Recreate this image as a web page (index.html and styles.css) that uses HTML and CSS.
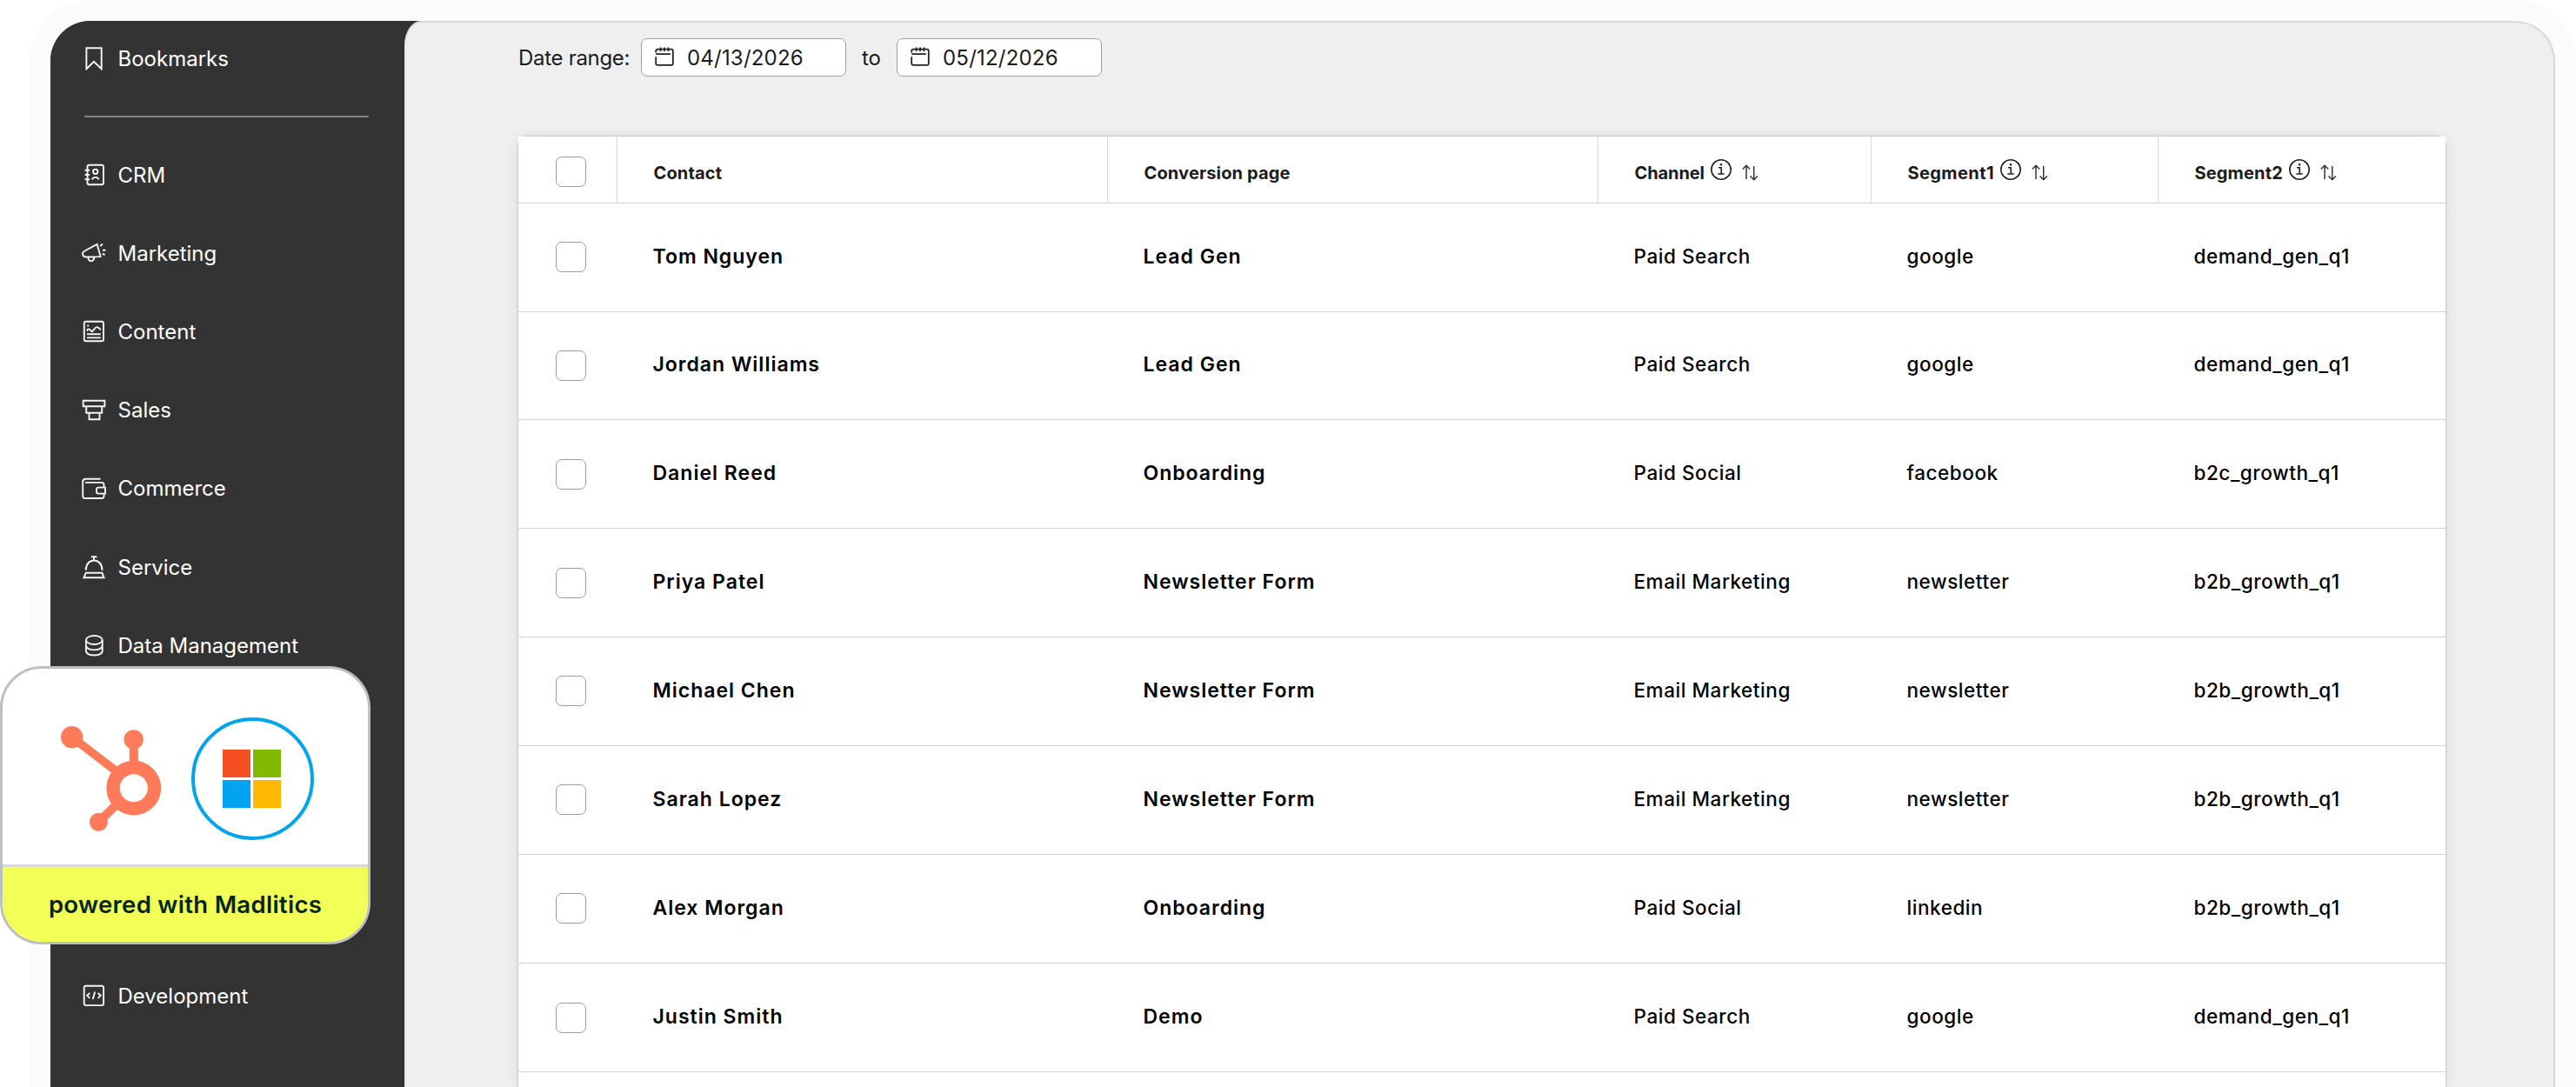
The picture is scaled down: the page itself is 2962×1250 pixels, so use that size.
FILE: index.html
```html
<!DOCTYPE html>
<html lang="en">
<head>
  <meta charset="UTF-8">
  <title>Contacts</title>
  <link rel="stylesheet" href="styles.css">
</head>
<body>
  <div class="window">
    <nav class="sidebar">
      <a class="nav-item nav-first">
        <svg class="nav-icon" viewBox="0 0 28 28"><path d="M5.4 2.3h17.3v24L14 17.8l-8.6 8.5z"/></svg>
        Bookmarks
      </a>
      <hr class="divider">
      <a class="nav-item">
        <svg class="nav-icon" viewBox="0 0 28 28"><rect x="6.5" y="2.8" width="18.5" height="22.4" rx="2"/><path d="M3.5 8.8h5.6M3.5 14h5.6M3.5 19.2h5.6M12 19.4c1-3.4 6.4-3.4 7.4 0"/><circle cx="15.7" cy="10.3" r="2.7"/></svg>
        CRM
      </a>
      <a class="nav-item">
        <svg class="nav-icon" viewBox="0 0 28 28"><path d="M17.6 3.8 2.6 12c-1.6.9-1.8 2-1.5 3.4.5 2.2 1.3 3.1 3.1 3.1l17.4-.4zM7.3 18.600c0 6.200 6.600 6.200 7.200-.2M21.200 6.200l2.700-2.700M24 10.800h3.400M23.600 15l3.200.9"/></svg>
        Marketing
      </a>
      <a class="nav-item">
        <svg class="nav-icon" viewBox="0 0 28 28"><rect x="2.8" y="2.7" width="22.2" height="22.6" rx="2"/><path d="M5.800 13.500c2-3.400 3.800-1.700 5.600.6 2.300 0 3.800-6.200 7-4.800 1.500.6 2 1.400 3.400 3M6 17.300h15.800M6 21.400h15.800M6.300 7.500h1.800"/></svg>
        Content
      </a>
      <a class="nav-item">
        <svg class="nav-icon" viewBox="0 0 28 28"><path d="M1.700 2.700h24.700v6.600H1.700zM5.200 9.300h18v7.500h-18zM8.500 16.800h12v7.400h-12z"/></svg>
        Sales
      </a>
      <a class="nav-item">
        <svg class="nav-icon" viewBox="0 0 28 28"><path d="M21.500 2.700H4.500Q1.200 3 1.200 6v16.500q0 2.500 2.500 2.500H23q2.500 0 2.500-2.500V19.500M4 6.900h19q2.500.2 2.500 2.500v3.200M27 12.600v7h-8q-2 0-2-2v-3q0-2 2-2z"/></svg>
        Commerce
      </a>
      <a class="nav-item">
        <svg class="nav-icon" viewBox="0 0 28 28"><path d="M10.800 2.200h6.600M14 2.200v4.200M4.700 17.700c0-15 18.800-15 18.800 0M4.800 20.800h18.600l2.200 5.500H2.400z"/></svg>
        Service
      </a>
      <a class="nav-item">
        <svg class="nav-icon" viewBox="0 0 28 28"><ellipse cx="14.3" cy="8" rx="9.4" ry="5"/><path d="M4.900 8v12.500c0 6.700 18.800 6.700 18.800 0V8M4.900 14.300c0 6.700 18.800 6.700 18.800 0"/></svg>
        Data Management
      </a>
      <a class="nav-item nav-last">
        <svg class="nav-icon" viewBox="0 0 28 28"><rect x="2.7" y="2.7" width="22.4" height="22.4" rx="2"/><path d="m9.200 10.800-3 3 3 3M18.700 10.800l3 3-3 3M15.200 9.500l-2.500 8.600"/></svg>
        Development
      </a>
    </nav>

    <main class="main">
      <div class="filters">
        <span class="filter-label">Date range:</span>
        <div class="date">
          <svg class="date-icon" viewBox="0 0 22 22"><path d="M1.200 6.500V4.700q0-2 2-2h15.600q2 0 2 2v14.400q0 1.800-1.800 1.800H3.200q-2 0-2-2V11.300M1.200 8.200h16.600M6.600.5v4.400M11 .5v4.400M15.400.5v4.400"/></svg>
          04/13/2026
        </div>
        <span class="filter-to">to</span>
        <div class="date">
          <svg class="date-icon" viewBox="0 0 22 22"><path d="M1.200 6.500V4.700q0-2 2-2h15.600q2 0 2 2v14.400q0 1.800-1.800 1.800H3.200q-2 0-2-2V11.300M1.200 8.200h16.600M6.600.5v4.400M11 .5v4.400M15.400.5v4.400"/></svg>
          05/12/2026
        </div>
      </div>

      <div class="table" id="contacts">
        <div class="row head">
          <div class="check-cell"><span class="checkbox"></span></div>
          <div>Contact</div>
          <div>Conversion page</div>
          <div><span class="narrow">Channel</span>
            <svg class="info" viewBox="0 0 24 24"><circle cx="12" cy="12" r="11.2"/><path d="M9 9.800h3.200v7M8.300 17h7.400"/><circle class="dot" cx="12" cy="6.300" r="1.300"/></svg>
            <svg class="sort" viewBox="0 0 19 19"><path d="M5 17V1.500M.8 5.600 5 1.300l4.200 4.300M13.700 2v15.500M9.500 13.400l4.200 4.300 4.200-4.300"/></svg>
          </div>
          <div><span class="wide">Segment1</span>
            <svg class="info" viewBox="0 0 24 24"><circle cx="12" cy="12" r="11.2"/><path d="M9 9.800h3.200v7M8.300 17h7.400"/><circle class="dot" cx="12" cy="6.300" r="1.300"/></svg>
            <svg class="sort" viewBox="0 0 19 19"><path d="M5 17V1.500M.8 5.600 5 1.300l4.200 4.300M13.700 2v15.500M9.500 13.400l4.200 4.300 4.200-4.300"/></svg>
          </div>
          <div>Segment2
            <svg class="info" viewBox="0 0 24 24"><circle cx="12" cy="12" r="11.2"/><path d="M9 9.800h3.200v7M8.300 17h7.400"/><circle class="dot" cx="12" cy="6.300" r="1.300"/></svg>
            <svg class="sort" viewBox="0 0 19 19"><path d="M5 17V1.500M.8 5.600 5 1.300l4.200 4.300M13.700 2v15.500M9.500 13.400l4.200 4.300 4.200-4.300"/></svg>
          </div>
        </div>
      </div>
    </main>
  </div>

  <div class="badge">
    <div class="logos">
      <svg class="hubspot" viewBox="208 284 346 362">
        <path d="M246 322 400 440" stroke-width="29"/>
        <path d="M459 330v90" stroke-width="30"/>
        <path d="m338 614 62-60" stroke-width="30"/>
        <circle cx="459" cy="497" r="71" stroke-width="46"/>
        <g class="nodes"><circle cx="246" cy="322" r="38"/><circle cx="458.5" cy="330" r="33.5"/><circle cx="338" cy="614" r="31.5"/></g>
      </svg>
      <div class="microsoft">
        <i class="red"></i><i class="green"></i><i class="blue"></i><i class="yellow"></i>
      </div>
    </div>
    <div class="powered">powered with Madlitics</div>
  </div>

  <script>
    const contacts = [
      ['Tom Nguyen', 'Lead Gen', 'Paid Search', 'google', 'demand_gen_q1'],
      ['Jordan Williams', 'Lead Gen', 'Paid Search', 'google', 'demand_gen_q1'],
      ['Daniel Reed', 'Onboarding', 'Paid Social', 'facebook', 'b2c_growth_q1'],
      ['Priya Patel', 'Newsletter Form', 'Email Marketing', 'newsletter', 'b2b_growth_q1'],
      ['Michael Chen', 'Newsletter Form', 'Email Marketing', 'newsletter', 'b2b_growth_q1'],
      ['Sarah Lopez', 'Newsletter Form', 'Email Marketing', 'newsletter', 'b2b_growth_q1'],
      ['Alex Morgan', 'Onboarding', 'Paid Social', 'linkedin', 'b2b_growth_q1'],
      ['Justin Smith', 'Demo', 'Paid Search', 'google', 'demand_gen_q1']
    ];
    const table = document.getElementById('contacts');
    contacts.forEach(contact => {
      const row = document.createElement('div');
      row.className = 'row';
      row.innerHTML = '<div class="check-cell"><span class="checkbox"></span></div>' +
        contact.map((value, i) => `<div class="${i < 2 ? 'strong' : ''}">${value}</div>`).join('');
      table.appendChild(row);
    });
  </script>
</body>
</html>
```
FILE: styles.css
```css
* {
  box-sizing: border-box;
}
body {
  margin: 0;
  height: 1250px;
  overflow: hidden;
  background: #fff;
  font-family: Inter, "Liberation Sans", sans-serif;
  color: #000;
}
.window {
  display: flex;
  width: 2880px;
  height: 1226px;
  margin: 24px 0 0 58px;
  border-radius: 46px 46px 0 0;
  background: linear-gradient(to right, #333 600px, #efefef 600px);
  box-shadow: 0 0 0 24px #fbfbfb;
  overflow: hidden;
}

/* sidebar */
.sidebar {
  width: 407px;
  flex-shrink: 0;
  background: #333;
  color: #fff;
}
.nav-item {
  display: flex;
  align-items: center;
  gap: 14px;
  height: 90.2px;
  padding-left: 35.5px;
  font-size: 24px;
}
.nav-first {
  height: 86px;
}
.nav-last {
  margin-top: 313px;
}
.nav-icon {
  width: 28px;
  height: 28px;
  fill: none;
  stroke: #f5f5f5;
  stroke-width: 1.9;
}
.divider {
  width: 327px;
  height: 2px;
  margin: 23px 0 21px 39px;
  border: 0;
  background: #858585;
}

/* main panel */
.main {
  flex: 1;
  padding: 18px 0 0 130px;
  background: #efefef;
  border: 2px solid #d8d8d8;
  border-left: 1px solid #d8d8d8;
  border-bottom: 0;
  border-radius: 19px 46px 0 0 / 28px 46px 0 0;
}
.filters {
  display: flex;
  align-items: center;
  height: 44px;
  font-size: 24px;
  color: #1c1c1c;
}
.filter-label {
  width: 141px;
  letter-spacing: -0.3px;
}
.date {
  display: flex;
  align-items: center;
  gap: 15px;
  width: 236px;
  height: 44px;
  padding-left: 15px;
  background: #fff;
  border: 1.5px solid #a0a0a0;
  border-radius: 7px;
  letter-spacing: 0.2px;
}
.filter-to {
  width: 58px;
  text-align: center;
}
.date-icon {
  width: 22px;
  height: 22px;
  margin-top: -3px;
  fill: none;
  stroke: #222;
  stroke-width: 1.8;
}

/* table */
.table {
  width: 2216px;
  margin-top: 69px;
  background: #fff;
  border-radius: 10px 10px 0 0;
  box-shadow: 0 0 0 1px #cbcbcb, 0 0 14px rgba(0, 0, 0, 0.1);
}
.row {
  display: grid;
  grid-template-columns: 113px 564px 564px 314px 330px 331px;
  height: 124.85px;
  border-bottom: 1px solid #d2d2d2;
  font-size: 22.5px;
  font-weight: 500;
  letter-spacing: 0.55px;
}
.row:last-child {
  height: 142px;
  padding-bottom: 17px;
  border-bottom: 0;
  background: linear-gradient(#d2d2d2, #d2d2d2) 0 124px / 100% 1px no-repeat;
}
.row > div {
  display: flex;
  align-items: center;
  padding: 0 0 3px 41.5px;
}
.row > .check-cell {
  padding: 0 0 0 43px;
}
.row > .strong {
  padding-bottom: 2px;
  font-size: 23px;
  font-weight: 600;
  letter-spacing: 1px;
}
.checkbox {
  width: 35px;
  height: 35px;
  background: #fff;
  border: 1.5px solid #9c9c9c;
  border-radius: 7px;
}
.head {
  height: 76.7px;
  background: #fff;
  font-size: 20px;
  font-weight: 700;
  letter-spacing: 0.15px;
  color: #1c1c1c;
}
.row.head > div {
  padding: 8px 0 0 41.5px;
}
.row.head > .check-cell {
  padding: 6px 0 0 43px;
}
.head > div + div {
  border-left: 1px solid #d8d8d8;
}
.narrow {
  letter-spacing: -0.1px;
}
.wide {
  letter-spacing: 0.4px;
}
.info {
  width: 24px;
  height: 24px;
  margin: -7px 0 0 7px;
  fill: none;
  stroke: #222;
  stroke-width: 1.6;
}
.info .dot {
  fill: #222;
  stroke: none;
}
.sort {
  width: 19px;
  height: 19px;
  margin: -1px 0 0 12px;
  fill: none;
  stroke: #333;
  stroke-width: 1.5;
}

/* floating badge over the sidebar */
.badge {
  position: absolute;
  left: 0;
  top: 766px;
  width: 426px;
  height: 320px;
  background: #fff;
  border: 3px solid #bcc0c0;
  border-radius: 48px;
  overflow: hidden;
}
.logos {
  display: flex;
  align-items: center;
  gap: 35px;
  height: 225px;
  padding: 27px 0 0 66.5px;
}
.hubspot {
  width: 115.5px;
  height: 121px;
  fill: none;
  stroke: #ff7a59;
}
.hubspot .nodes {
  fill: #ff7a59;
  stroke: none;
}
.microsoft {
  display: grid;
  grid-template-columns: 32px 32px;
  grid-auto-rows: 32px;
  gap: 3px;
  place-content: center;
  width: 141px;
  height: 141px;
  padding-right: 2px;
  border: 4.5px solid #00a4ef;
  border-radius: 50%;
}
.red { background: #f65022; }
.green { background: #80ba01; }
.blue { background: #02a4ef; }
.yellow { background: #ffb902; }
.powered {
  display: flex;
  align-items: center;
  justify-content: center;
  height: 89px;
  border-top: 3px solid #d8d8d8;
  background: #f1ff57;
  font-size: 27.5px;
  font-weight: 600;
  letter-spacing: 0.3px;
  color: #06251f;
}
```
